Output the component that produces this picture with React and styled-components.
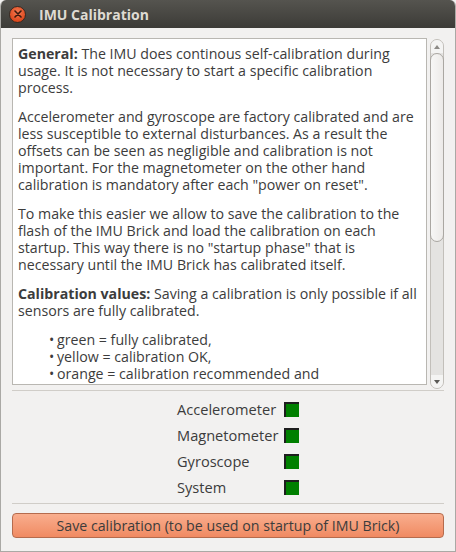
import React from 'react';
import styled, { createGlobalStyle } from 'styled-components';

const GlobalStyle = createGlobalStyle`
  html, body {
    margin: 0;
    padding: 0;
    background: #f2f1f0;
  }
  * {
    box-sizing: border-box;
  }
`;

const Window = styled.div`
  width: 456px;
  height: 552px;
  display: flex;
  flex-direction: column;
  background: #f2f1f0;
  border: 1px solid #aaa9a5;
  border-top: none;
  border-radius: 6px 6px 0 0;
  overflow: hidden;
  font-family: 'Open Sans', 'DejaVu Sans', sans-serif;
  color: #3c3c3c;
`;

const TitleBar = styled.div`
  height: 28px;
  flex: none;
  display: flex;
  align-items: center;
  gap: 13px;
  padding-left: 9px;
  background: linear-gradient(#55544f, #3c3b37);
  margin: 0 -1px;
`;

const CloseButton = styled.div`
  width: 17px;
  height: 17px;
  border-radius: 50%;
  background: radial-gradient(circle at 50% 35%, #f47a52, #dd4a1f 70%, #b8380f);
  border: 1px solid #3a2a22;
  display: flex;
  align-items: center;
  justify-content: center;
`;

const Title = styled.span`
  font-weight: bold;
  font-size: 14px;
  color: #dfdbd2;
`;

const Body = styled.div`
  flex: 1;
  display: flex;
  flex-direction: column;
  padding: 10px 11px 0 11px;
`;

const TextArea = styled.div`
  display: flex;
  gap: 3px;
  height: 350px;
`;

const TextBox = styled.div`
  flex: 1;
  height: 347px;
  background: #fff;
  border: 1px solid #b9b7b2;
  overflow: hidden;
  padding: 6px 4px 0 5px;
  font-size: 14.2px;
  line-height: 17px;
`;

const Para = styled.p`
  margin: 0 0 12px 0;
`;

const BulletList = styled.div`
  padding-left: 31px;
`;

const Bullet = styled.div`
  white-space: nowrap;
`;

const Dot = styled.span`
  display: inline-block;
  width: 8px;
  font-size: 14px;
  line-height: 17px;
`;

const ScrollTrack = styled.div`
  width: 14px;
  height: 350px;
  margin-top: 1px;
  border: 1px solid #c2bfba;
  border-radius: 7px;
  background: #e4e3e1;
  display: flex;
  flex-direction: column;
  align-items: stretch;
`;

const ScrollArrow = styled.div`
  height: 13px;
  flex: none;
  display: flex;
  align-items: center;
  justify-content: center;
  background: #f4f4f3;
  border-radius: ${({ $up }) => ($up ? '6px 6px 0 0' : '0 0 6px 6px')};
`;

const ScrollThumb = styled.div`
  height: 189px;
  flex: none;
  margin: 0 -1px;
  border: 1px solid #aaa7a2;
  border-radius: 7px;
  background: linear-gradient(90deg, #f7f7f6, #eceae8);
`;

const ScrollRest = styled.div`
  flex: 1;
`;

const StatusSection = styled.div`
  margin-top: 2px;
  border-top: 1px solid #d0cdc8;
  border-bottom: 1px solid #d0cdc8;
  padding: 5px 0 3px 165px;
  display: grid;
  grid-template-columns: 99px 15px;
  grid-auto-rows: 26px;
  column-gap: 8px;
  align-items: center;
`;

const StatusLabel = styled.span`
  font-size: 14.6px;
  color: #3c3c3c;
`;

const StatusBox = styled.div`
  width: 15px;
  height: 15px;
  background: ${({ $color }) => $color};
  border-left: 2px solid #1e1e1e;
  border-top: 2px solid #1e1e1e;
`;

const SaveButton = styled.button`
  margin-top: 9px;
  height: 25px;
  width: 100%;
  border: 1px solid #b56b4d;
  border-radius: 4px;
  background: linear-gradient(#f9ae8e, #f08a62);
  color: #3c3c3c;
  font-family: 'Open Sans', 'DejaVu Sans', sans-serif;
  font-size: 14.2px;
  padding: 0;
`;

const sensors = ['Accelerometer', 'Magnetometer', 'Gyroscope', 'System'];

const bullets = [
  'green = fully calibrated,',
  'yellow = calibration OK,',
  'orange = calibration recommended and',
  'red = calibration needed.',
];

export default function App() {
  return (
    <>
      <GlobalStyle />
      <Window>
        <TitleBar>
          <CloseButton>
            <svg width="8" height="8" viewBox="0 0 8 8">
              <path d="M1 1 L7 7 M7 1 L1 7" stroke="#3b1a0e" strokeWidth="1.6" strokeLinecap="round" />
            </svg>
          </CloseButton>
          <Title>IMU Calibration</Title>
        </TitleBar>
        <Body>
          <TextArea>
            <TextBox>
              <Para>
                <b>General:</b> The IMU does continous self-calibration during usage. It is not necessary to start a specific calibration process.
              </Para>
              <Para>
                Accelerometer and gyroscope are factory calibrated and are less susceptible to external disturbances. As a result the offsets can be seen as negligible and calibration is not important. For the magnetometer on the other hand calibration is mandatory after each "power on reset".
              </Para>
              <Para>
                To make this easier we allow to save the calibration to the flash of the IMU Brick and load the calibration on each startup. This way there is no "startup phase" that is necessary until the IMU Brick has calibrated itself.
              </Para>
              <Para>
                <b>Calibration values:</b> Saving a calibration is only possible if all sensors are fully calibrated.
              </Para>
              <BulletList>
                {bullets.map((b) => (
                  <Bullet key={b}>
                    <Dot>•</Dot>
                    {b}
                  </Bullet>
                ))}
              </BulletList>
            </TextBox>
            <ScrollTrack>
              <ScrollArrow $up>
                <svg width="6" height="4" viewBox="0 0 6 4"><path d="M0 4 L3 0 L6 4 Z" fill="#8c8a86" /></svg>
              </ScrollArrow>
              <ScrollThumb />
              <ScrollRest />
              <ScrollArrow>
                <svg width="6" height="4" viewBox="0 0 6 4"><path d="M0 0 L6 0 L3 4 Z" fill="#5a5955" /></svg>
              </ScrollArrow>
            </ScrollTrack>
          </TextArea>
          <StatusSection>
            {sensors.map((s) => (
              <React.Fragment key={s}>
                <StatusLabel>{s}</StatusLabel>
                <StatusBox $color="#008000" />
              </React.Fragment>
            ))}
          </StatusSection>
          <SaveButton>Save calibration (to be used on startup of IMU Brick)</SaveButton>
        </Body>
      </Window>
    </>
  );
}
